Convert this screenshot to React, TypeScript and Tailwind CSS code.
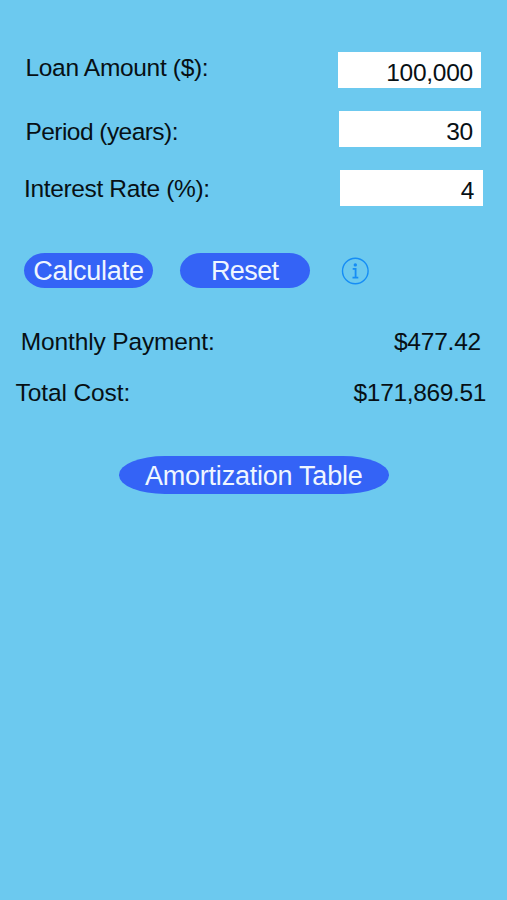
function Info() {
  return (
    <svg className="h-7 w-7" viewBox="0 0 28 28" fill="none" role="img" aria-label="Information">
      <circle cx="14.3" cy="14" r="12.8" stroke="#168df5" strokeWidth="1.4" />
      <circle cx="14.3" cy="7.9" r="1.7" fill="#168df5" />
      <path d="M11.7 11.8H14.6V20.6M11.5 20.7H17.3" stroke="#168df5" strokeWidth="1.8" />
    </svg>
  );
}

const field = "block h-9 bg-white text-right outline-none";
const button = "flex shrink-0 justify-center whitespace-nowrap bg-[#3463f6] text-[27px] text-[#eff6ff]";

export default function App() {
  return (
    <main className="flex h-[900px] w-[507px] flex-col overflow-hidden bg-[#6cc9ef] font-['Liberation_Sans',Arial,sans-serif] text-[24.5px] leading-9 text-[#071015]">
      <div className="mt-[52px] flex h-9 items-start justify-between pr-[26px] pl-[25.5px]">
        <label htmlFor="amount" className="-mt-0.5 tracking-[-0.32px]">Loan Amount ($):</label>
        <input id="amount" defaultValue="100,000" className={`${field} w-[143px] pt-1.5 pr-2 tracking-[-0.25px]`} />
      </div>
      <div className="mt-[23px] flex h-9 items-start justify-between pr-[26px] pl-[25.5px]">
        <label htmlFor="period" className="mt-[3px] tracking-[-0.55px]">Period (years):</label>
        <input id="period" defaultValue="30" className={`${field} w-[142px] pt-1.5 pr-2 tracking-[-0.2px]`} />
      </div>
      <div className="mt-[23px] flex h-9 items-start justify-between pr-[24.5px] pl-[24px]">
        <label htmlFor="rate" className="mt-px tracking-[-0.35px]">Interest Rate (%):</label>
        <input id="rate" defaultValue="4" className={`${field} w-[142.5px] pt-[5px] pr-2`} />
      </div>
      <div className="mt-[47px] flex h-[35px] items-center pl-6">
        <button className={`${button} h-[35px] w-[129px] rounded-[21px/17.5px] leading-[37px] tracking-[-0.25px]`}>Calculate</button>
        <button className={`${button} ml-[27px] h-[35px] w-[129.5px] rounded-[21px/17.5px] leading-[37px] tracking-[-0.6px]`}>Reset</button>
        <button className="ml-[31px]"><Info /></button>
      </div>
      <div className="mt-9 flex h-9 justify-between pr-[26px] pl-[20.7px]">
        <span className="tracking-[-0.13px]">Monthly Payment:</span>
        <span className="tracking-[-0.22px]">$477.42</span>
      </div>
      <div className="mt-[15px] flex h-9 justify-between pr-[21px] pl-[15.5px]">
        <span className="tracking-[-0.1px]">Total Cost:</span>
        <span className="tracking-[-0.35px]">$171,869.51</span>
      </div>
      <button className={`${button} mt-[45px] ml-[119px] h-[37.5px] w-[269.5px] rounded-[46px/18.75px] leading-[40px] tracking-[-0.23px]`}>Amortization Table</button>
    </main>
  );
}
